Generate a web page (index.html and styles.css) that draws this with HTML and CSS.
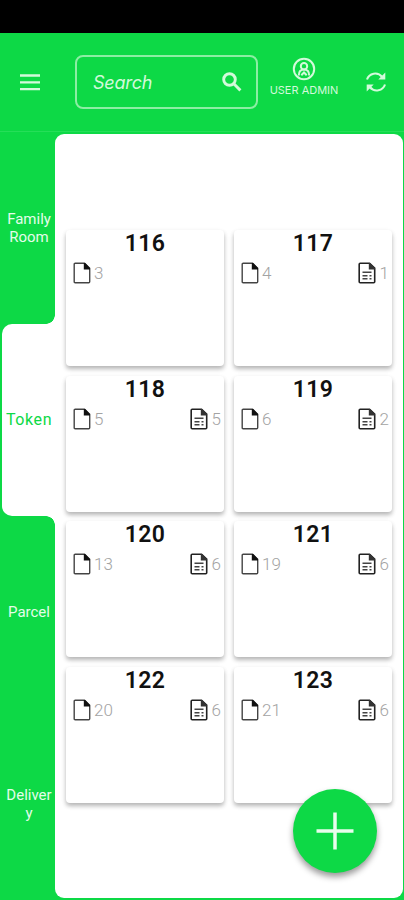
FILE: index.html
```
<!DOCTYPE html>
<html lang="en">
<head>
<meta charset="utf-8">
<title>Tokens</title>
<link rel="stylesheet" href="styles.css">
</head>
<body>
<svg class="defs" aria-hidden="true">
  <symbol id="page" viewBox="0 0 18 22">
    <path d="M2.2 1.2H11.5l5.2 5v13.6q0 1-1 1H2.2q-1 0-1-1V2.2q0-1 1-1z" fill="none" stroke="#444" stroke-width="1.4"/>
    <path d="M10.8 1h1.4L17 6v1.4h-6.2z" fill="#111"/>
  </symbol>
  <symbol id="bill" viewBox="0 0 18 22">
    <path d="M2.2 1.2H11.5l5.2 5v13.6q0 1-1 1H2.2q-1 0-1-1V2.2q0-1 1-1z" fill="none" stroke="#222" stroke-width="1.6"/>
    <path d="M10.8 1h1.4L17 6v1.4h-6.2z" fill="#333"/>
    <path d="M4.5 10.2h9M4.5 13.7h5M11.5 13.7h2M4.5 16.8h5M11.5 16.8h2" fill="none" stroke="#444" stroke-width="1.6"/>
  </symbol>
</svg>
<div class="status"></div>
<header class="header">
  <svg class="menu" viewBox="0 0 20 17"><path d="M0 1.5h20M0 8.3h20M0 15.1h20"/></svg>
  <div class="search">
    <span>Search</span>
    <svg class="lens" viewBox="0 0 20 20"><circle cx="7.5" cy="7.5" r="5.8"/><path d="M11.8 11.8l6.6 6.6"/></svg>
  </div>
  <div class="user">
    <svg class="avatar" viewBox="0 0 24 24"><circle cx="12" cy="12" r="10.2"/><circle cx="12" cy="9.3" r="3.2"/><path d="M6.8 18.5c0-3.8 2-6 5.2-6s5.2 2.2 5.2 6M9.3 18.3l2.7-2.8 2.7 2.8"/></svg>
    <span>USER ADMIN</span>
  </div>
  <svg class="refresh" viewBox="0 0 20 22"><path d="M1 8.5C3 2.3 11.5.2 16.2 6M19 13.5c-2 6.2-10.5 8.3-15.2 2.5"/><path class="tip" d="M19.3 1.5v7h-7zM.7 20.5v-7h7z"/></svg>
</header>
<main class="body">
  <nav class="rail">
    <div class="tab">Family Room</div>
    <div class="tab active">Token</div>
    <div class="tab">Parcel</div>
    <div class="tab">Deliver<br>y</div>
  </nav>
  <section class="panel">
    <article class="card"><h2>116</h2><div class="row"><svg><use href="#page"/></svg><span>3</span></div></article>
    <article class="card"><h2>117</h2><div class="row"><svg><use href="#page"/></svg><span>4</span><svg class="end"><use href="#bill"/></svg><span>1</span></div></article>
    <article class="card"><h2>118</h2><div class="row"><svg><use href="#page"/></svg><span>5</span><svg class="end"><use href="#bill"/></svg><span>5</span></div></article>
    <article class="card"><h2>119</h2><div class="row"><svg><use href="#page"/></svg><span>6</span><svg class="end"><use href="#bill"/></svg><span>2</span></div></article>
    <article class="card"><h2>120</h2><div class="row"><svg><use href="#page"/></svg><span>13</span><svg class="end"><use href="#bill"/></svg><span>6</span></div></article>
    <article class="card"><h2>121</h2><div class="row"><svg><use href="#page"/></svg><span>19</span><svg class="end"><use href="#bill"/></svg><span>6</span></div></article>
    <article class="card"><h2>122</h2><div class="row"><svg><use href="#page"/></svg><span>20</span><svg class="end"><use href="#bill"/></svg><span>6</span></div></article>
    <article class="card"><h2>123</h2><div class="row"><svg><use href="#page"/></svg><span>21</span><svg class="end"><use href="#bill"/></svg><span>6</span></div></article>
  </section>
</main>
<button class="fab" aria-label="Add"><svg viewBox="0 0 38 38"><path d="M19 0.5v37M0.5 19h37"/></svg></button>
</body>
</html>
```
FILE: styles.css
```
* { box-sizing: border-box; }
body {
  margin: 0;
  width: 404px;
  height: 900px;
  overflow: hidden;
  position: relative;
  display: flex;
  flex-direction: column;
  background: #0dd946;
  font-family: Roboto, sans-serif;
}
svg { display: block; flex: none; }
.defs { position: absolute; width: 0; height: 0; }
.status { height: 33px; background: #000; }
.header {
  height: 99px;
  display: flex;
  align-items: center;
  color: #d3fadb;
  border-bottom: 1px solid #25df58;
}
.header svg { fill: none; stroke: #d3fadb; }
.header .menu { width: 20px; height: 17px; margin-left: 20px; stroke-width: 2.3; }
.search {
  width: 183px;
  height: 54px;
  margin-left: 35px;
  padding: 0 14px 0 16px;
  display: flex;
  align-items: center;
  justify-content: space-between;
  border: 2px solid #8ceea4;
  border-radius: 8px;
  font: italic 400 18px Inter, sans-serif;
  letter-spacing: -.2px;
}
.header .lens { width: 20px; height: 20px; stroke-width: 2.9; }
.user {
  width: 72px;
  margin-left: 10px;
  padding-bottom: 12px;
  display: flex;
  flex-direction: column;
  align-items: center;
  font: 400 11px/12px Inter, sans-serif;
  white-space: nowrap;
}
.header .avatar { width: 24px; height: 24px; margin-bottom: 3px; stroke-width: 2; }
.header .refresh { width: 20px; height: 22px; margin-left: 26px; stroke-width: 2.1; }
.header .refresh .tip { fill: #d3fadb; stroke: none; }
.body { flex: 1; display: flex; }
.rail { width: 55px; display: flex; flex-direction: column; }
.tab {
  flex: 1;
  display: flex;
  align-items: center;
  justify-content: center;
  padding-left: 3px;
  text-align: center;
  color: #e4fdea;
  font-size: 15px;
  line-height: 18px;
}
.tab.active {
  position: relative;
  margin-left: 2px;
  padding-left: 1px;
  background: #fff;
  color: #0dd946;
  font-size: 16px;
  letter-spacing: .6px;
  border-radius: 10px 0 0 10px;
}
.tab.active::before, .tab.active::after {
  content: "";
  position: absolute;
  right: 0;
  width: 9px;
  height: 9px;
}
.tab.active::before { top: -9px; background: radial-gradient(circle at 0 0, transparent 8.5px, #fff 9px); }
.tab.active::after { bottom: -9px; background: radial-gradient(circle at 0 100%, transparent 8.5px, #fff 9px); }
.panel {
  width: 348px;
  margin: 2px 0;
  padding: 96px 11px 0;
  display: grid;
  grid-template-columns: 158px 158px;
  grid-auto-rows: 136px;
  gap: 9.7px 10px;
  align-content: start;
  background: #fff;
  border-radius: 9px;
}
.card {
  background: #fff;
  border-radius: 4px;
  box-shadow: 0 3px 4px rgba(0, 0, 0, .25), 0 2px 6px rgba(0, 0, 0, .06);
}
.card h2 {
  margin: 0;
  text-align: center;
  font-size: 23px;
  line-height: 27px;
  font-weight: 600;
  letter-spacing: .3px;
  color: #111;
}
.row {
  display: flex;
  align-items: center;
  height: 22px;
  margin: 5px 3px 0 7px;
  color: #a3a3a3;
  font-size: 17px;
  font-weight: 300;
}
.row svg { width: 18px; height: 22px; margin-right: 3px; }
.row .end { margin-left: auto; margin-right: 4px; }
.fab {
  position: absolute;
  left: 293px;
  top: 789px;
  width: 84px;
  height: 84px;
  padding: 0;
  border: 0;
  border-radius: 50%;
  display: grid;
  place-items: center;
  background: #0dd946;
  box-shadow: 0 4px 6px rgba(0, 0, 0, .4);
}
.fab svg { width: 38px; height: 38px; stroke: #e8fdec; stroke-width: 3.5; }
```
